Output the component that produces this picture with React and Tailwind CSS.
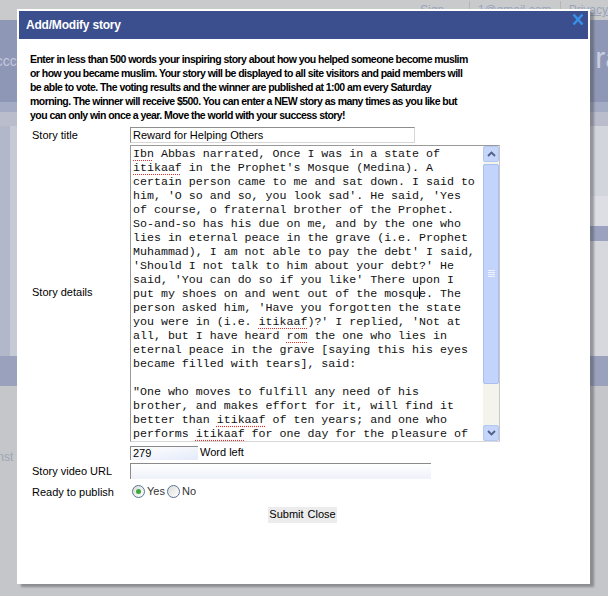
import React from 'react';

// story text, wrapped the way the textarea shows it; {u: '...'} marks a spell-check squiggle
const storyLines = [
  [{ u: 'Ibn' }, ' Abbas narrated, Once I was in a state of'],
  [{ u: 'itikaaf' }, " in the Prophet's Mosque (Medina). A"],
  ['certain person came to me and sat down. I said to'],
  ["him, 'O so and so, you look sad'. He said, 'Yes"],
  ['of course, o fraternal brother of the Prophet.'],
  ['So-and-so has his due on me, and by the one who'],
  ['lies in eternal peace in the grave (i.e. Prophet'],
  ["Muhammad), I am not able to pay the debt' I said,"],
  ["'Should I not talk to him about your debt?' He"],
  ["said, 'You can do so if you like' There upon I"],
  ['put my shoes on and went out of the mosqu', { caret: true }, 'e. The'],
  ["person asked him, 'Have you forgotten the state"],
  ['you were in (i.e. ', { u: 'itikaaf' }, ")?' I replied, 'Not at"],
  ['all, but I have heard ', { u: 'rom' }, ' the one who lies in'],
  ['eternal peace in the grave [saying this his eyes'],
  ['became filled with tears], said:'],
  [''],
  ['"One who moves to fulfill any need of his'],
  ['brother, and makes effort for it, will find it'],
  ['better than ', { u: 'itikaaf' }, ' of ten years; and one who'],
  ['performs ', { u: 'itikaaf' }, ' for one day for the pleasure of'],
];

const Chevron = ({ up }) => (
  <svg width="9" height="6" viewBox="0 0 9 6">
    <polyline
      points={up ? '1,5 4.5,1.5 8,5' : '1,1 4.5,4.5 8,1'}
      fill="none"
      stroke="#4d6185"
      strokeWidth="1.8"
    />
  </svg>
);

const ScrollButton = ({ up }) => (
  <div className="h-[16px] rounded-[2px] border border-[#b4c7f2] bg-[#c6d6fb] flex items-center justify-center">
    <Chevron up={up} />
  </div>
);

const Scrollbar = () => (
  <div className="w-[16px] bg-[#f4f3ec] flex flex-col">
    <ScrollButton up />
    <div className="mt-[2px] h-[220px] rounded-[2px] border border-[#a9bff0] bg-[#c3d4fc] flex flex-col items-center justify-center gap-[1px]">
      <div className="w-[7px] h-px bg-[#eef3ff]" />
      <div className="w-[7px] h-px bg-[#eef3ff]" />
      <div className="w-[7px] h-px bg-[#eef3ff]" />
      <div className="w-[7px] h-px bg-[#eef3ff]" />
    </div>
    <div className="flex-1" />
    <ScrollButton />
  </div>
);

const Radio = ({ checked }) => (
  <span className="w-[13px] h-[13px] rounded-full border border-[#56749b] bg-gradient-to-br from-[#dcdcd6] to-white flex items-center justify-center">
    {checked && <span className="w-[5px] h-[5px] rounded-full bg-[#3ea83a]" />}
  </span>
);

const CloseIcon = () => (
  <svg width="12" height="13" viewBox="0 0 12 13">
    <line x1="1.5" y1="1.5" x2="10.5" y2="11.5" stroke="#3a8fe8" strokeWidth="2.6" />
    <line x1="10.5" y1="1.5" x2="1.5" y2="11.5" stroke="#3a8fe8" strokeWidth="2.6" />
  </svg>
);

export default function App() {
  return (
    <div className="relative w-[608px] h-[596px] overflow-hidden bg-[#c4c6c9] font-['Liberation_Sans',Arial,sans-serif]">
      {/* dimmed page behind the dialog */}
      <div className="h-[20px] bg-[#c9cacc] flex items-start text-[12px] text-[#9aa5bd]">
        <div className="ml-[420px] flex items-start gap-[8px] pt-[1px]">
          <span className="underline">Sign out</span>
          <span className="w-px h-[20px] bg-[#b3b5b9]" />
          <span className="w-[80px] underline">1@gmail.com</span>
          <span className="w-px h-[20px] bg-[#b3b5b9]" />
          <span className="underline">Privacy</span>
        </div>
      </div>
      <div className="h-[82px] bg-[#8e97b5] flex items-center justify-between">
        <span className="-ml-[12px] text-[14px] text-[#c3c9dd]">accc</span>
        <span className="-mr-[14px] mb-[8px] text-[30px] text-[#c9cee0]">ra</span>
      </div>
      <div className="h-[10px] bg-[#a4abc4]" />
      <div className="h-[14px] bg-[#b9bdcc]" />
      <div className="h-[230px] bg-[#b2b7c9] flex justify-between">
        <div className="ml-[10px] w-[10px] bg-[#c6c9d6]" />
        <div className="w-[20px] flex flex-col">
          <div className="h-[70px] bg-[#d3d5dc]" />
          <div className="h-[30px] bg-[#dcdee4]" />
          <div className="h-[15px] bg-[#9aa2bf]" />
          <div className="flex-1 bg-[#d6d8de]" />
        </div>
      </div>
      <div className="h-[30px] bg-[#9aa1bd]" />
      <div className="pt-[62px] text-[12px] text-[#9ea7b4]">
        <span className="-ml-[6px]">Inst</span>
      </div>

      {/* dialog */}
      <div className="absolute left-[17px] top-[9px] w-[573px] h-[575px] bg-white p-[2px] shadow-[4px_3px_2px_rgba(70,72,78,0.45)]">
        <div className="h-[28px] bg-[#3b4f8e] flex items-center justify-between pl-[7px] pr-[4px]">
          <span className="text-white font-bold text-[12px] tracking-[-0.2px]">Add/Modify story</span>
          <span className="self-start mt-[2px]">
            <CloseIcon />
          </span>
        </div>

        <div className="pt-[13px] pl-[11px]">
          <p className="font-bold text-[10.5px] tracking-[-0.55px] leading-[14px] text-black whitespace-nowrap">
            Enter in less than 500 words your inspiring story about how you helped someone become muslim
            <br />
            or how you became muslim. Your story will be displayed to all site visitors and paid members will
            <br />
            be able to vote. The voting results and the winner are published at 1:00 am every Saturday
            <br />
            morning. The winner will receive $500. You can enter a NEW story as many times as you like but
            <br />
            you can only win once a year. Move the world with your success story!
          </p>

          <div className="mt-[5px] ml-[2px] grid grid-cols-[98px_1fr] text-[11px] text-black">
            <div className="flex items-center">Story title</div>
            <div className="w-[285px] h-[16px] border border-[#8f8f8f] border-r-[#d6d6d6] border-b-[#d6d6d6] px-[2px] flex items-center leading-none">
              Reward for Helping Others
            </div>

            <div className="flex items-center">Story details</div>
            <div className="mt-px w-[370px] h-[297px] border border-[#9a9a9a] border-r-[#c8c8c8] border-b-[#d8d8d8] flex">
              <div className="flex-1 pl-[2px] pt-px font-['Liberation_Mono','Courier_New',monospace] text-[11.63px] leading-[14px] text-[#111]">
                {storyLines.map((line, i) => (
                  <div key={i} className="h-[14px] whitespace-pre">
                    {line.map((seg, j) =>
                      typeof seg === 'string' ? (
                        seg
                      ) : seg.caret ? (
                        <span key={j} className="inline-block w-px h-[12px] -mr-px bg-black align-[-2px]" />
                      ) : (
                        <span key={j} className="underline decoration-dotted decoration-[#e23030] underline-offset-[3px]">
                          {seg.u}
                        </span>
                      )
                    )}
                  </div>
                ))}
              </div>
              <Scrollbar />
            </div>

            <div />
            <div className="mt-[4px] flex items-center h-[14px]">
              <div className="w-[68px] h-[14px] border-t border-l border-[#8a8a8a] bg-gradient-to-br from-white via-[#f2f5fc] to-[#e3eafa] px-[2px] flex items-center leading-none">
                279
              </div>
              <span className="ml-[2px]">Word left</span>
            </div>

            <div className="mt-[3px] flex items-center">Story video URL</div>
            <div className="mt-[3px] w-[301px] h-[16px] border-t border-l border-[#8a8a8a] bg-gradient-to-b from-white to-[#eef1fa]" />

            <div className="mt-[5px] flex items-center">Ready to publish</div>
            <div className="mt-[5px] h-[15px] flex items-center">
              <span className="ml-[2px]">
                <Radio checked />
              </span>
              <span className="ml-[2px] text-[#333]">Yes</span>
              <span className="ml-[2px]">
                <Radio />
              </span>
              <span className="ml-[2px] text-[#333]">No</span>
            </div>
          </div>

          <div className="mt-[6px] flex justify-center pr-[13px]">
            <div className="h-[16px] bg-[#ececec] flex items-center gap-[4px] px-[1px] text-[11px] text-black">
              <button className="leading-none">Submit</button>
              <button className="leading-none">Close</button>
            </div>
          </div>
        </div>
      </div>
    </div>
  );
}
